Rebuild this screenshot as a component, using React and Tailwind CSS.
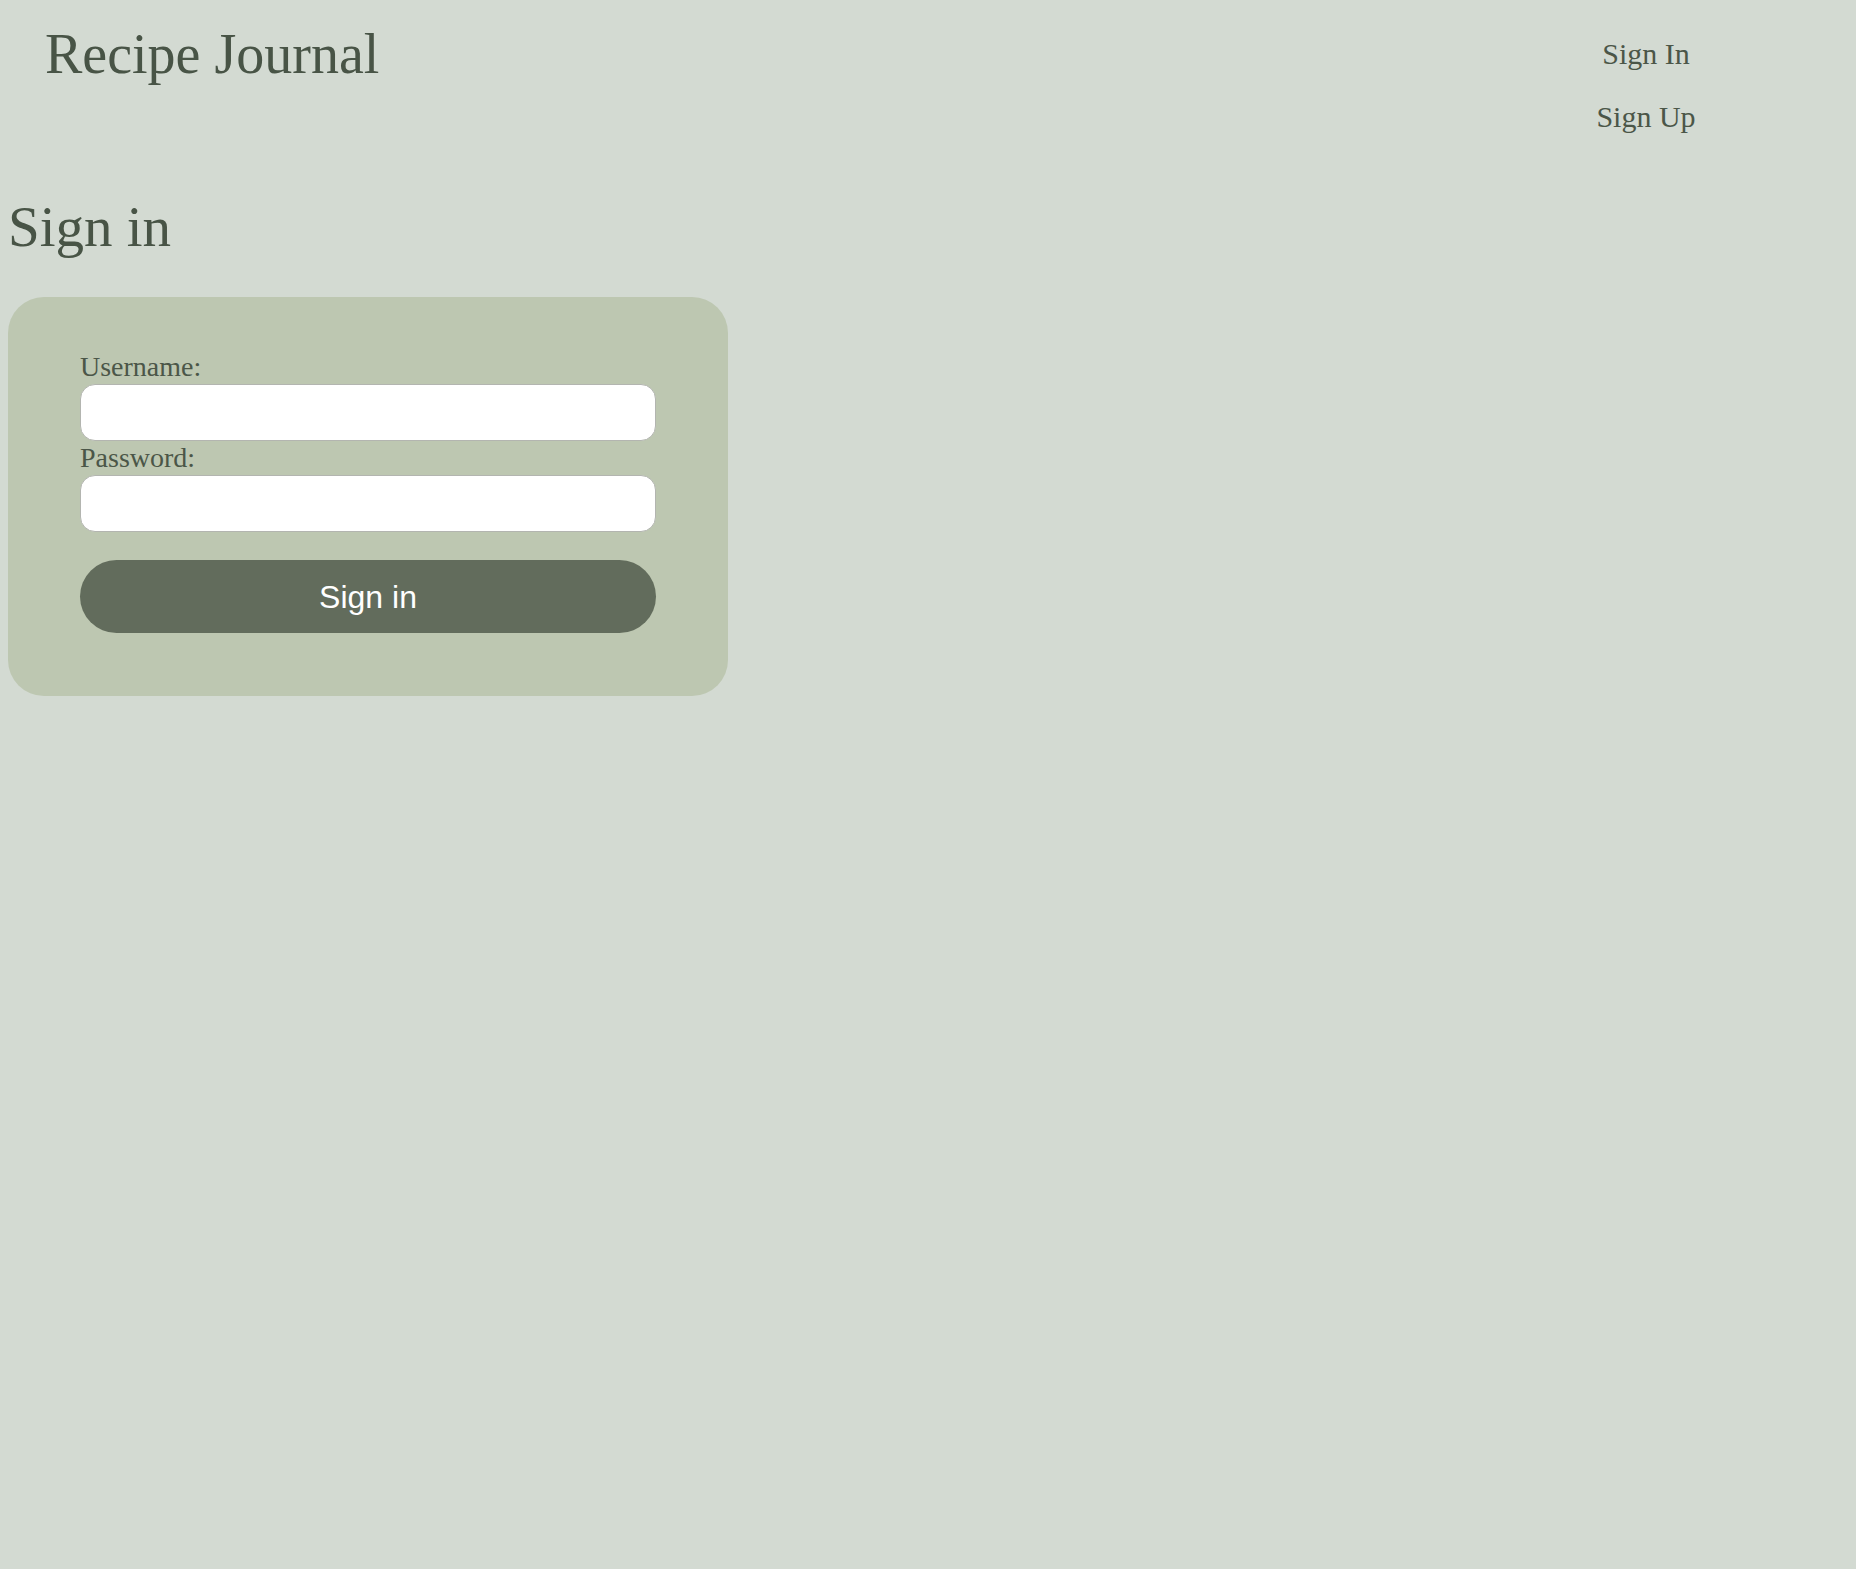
import React, { useState } from "react";

const serif = "font-['Liberation_Serif','Times_New_Roman',serif]";

const Header = () => (
  <header className="flex items-start justify-between pt-[22px]">
    <h1 className={`${serif} pl-[37px] text-[56px] leading-[64px] text-[#485446]`}>
      Recipe Journal
    </h1>
    <nav className="mr-[110px] w-[200px]">
      <ul className={`${serif} text-center text-[30px] leading-[63px] text-[#4b5648]`}>
        <li>
          <a href="#">Sign In</a>
        </li>
        <li>
          <a href="#">Sign Up</a>
        </li>
      </ul>
    </nav>
  </header>
);

const App = () => {
  const [username, setUsername] = useState("");
  const [password, setPassword] = useState("");

  return (
    <div className="min-h-[1569px] bg-[#d3dad2] pl-[8px]">
      <Header />

      <h2 className={`${serif} mt-[47px] text-[57px] leading-[64px] text-[#485446]`}>
        Sign in
      </h2>

      {/* Sign in card */}
      <form
        className="mt-[38px] w-[720px] rounded-[36px] bg-[#bdc7b1] px-[72px] pt-[53px] pb-[63px]"
        onSubmit={(e) => e.preventDefault()}
      >
        <label className={`${serif} block text-[28px] leading-[34px] text-[#4b5648]`}>
          Username:
        </label>
        <input
          type="text"
          value={username}
          onChange={(e) => setUsername(e.target.value)}
          className="block h-[57px] w-full rounded-[15px] border border-[#b3b5b0] bg-white px-4 outline-none"
        />
        <label className={`${serif} block text-[28px] leading-[34px] text-[#4b5648]`}>
          Password:
        </label>
        <input
          type="password"
          value={password}
          onChange={(e) => setPassword(e.target.value)}
          className="block h-[57px] w-full rounded-[15px] border border-[#b3b5b0] bg-white px-4 outline-none"
        />
        <button
          type="submit"
          className="mt-[28px] h-[73px] w-full rounded-full bg-[#626c5c] font-['Liberation_Sans',Arial,sans-serif] text-[32px] text-white"
        >
          Sign in
        </button>
      </form>
    </div>
  );
};

export default App;
